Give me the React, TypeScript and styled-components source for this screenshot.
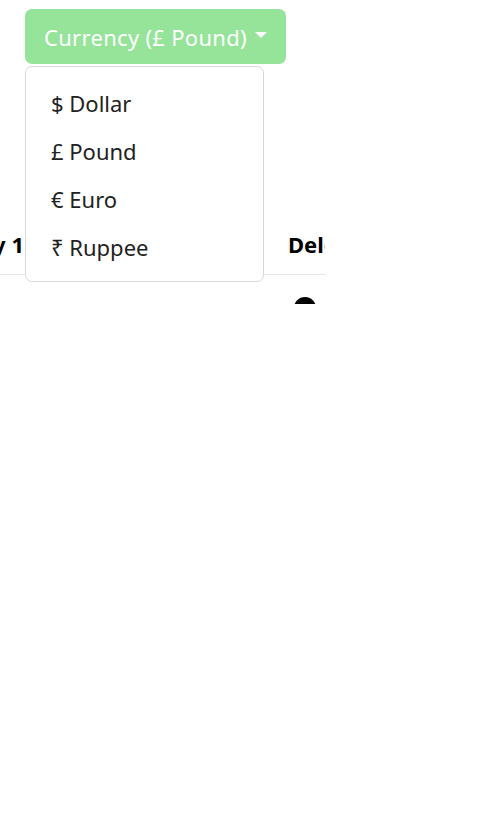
import React from "react";
import styled, { createGlobalStyle } from "styled-components";

const Global = createGlobalStyle`
  html, body { margin: 0; padding: 0; background: #fff; }
  body { font-family: "Noto Sans", "Open Sans", sans-serif; }
`;

const Frame = styled.div`
  position: relative;
  width: 325px;
  height: 304px;
  overflow: hidden;
`;

const Toolbar = styled.div`
  box-sizing: border-box;
  padding: 9px 0 0 25px;
  height: 196px;
`;

const DropButton = styled.button`
  display: inline-flex;
  align-items: center;
  gap: 8px;
  height: 55px;
  padding: 0 19px 0 19px;
  border: none;
  border-radius: 7px;
  background: #95e499;
  color: #fff;
  font-family: inherit;
  font-size: 22px;
  letter-spacing: 0.3px;
  cursor: pointer;
`;

const Caret = styled.span`
  width: 0;
  height: 0;
  border-left: 6.5px solid transparent;
  border-right: 6.5px solid transparent;
  border-top: 6.5px solid #fff;
  margin-top: -3px;
`;

const Menu = styled.ul`
  position: absolute;
  z-index: 2;
  left: 25px;
  top: 66px;
  width: 239px;
  box-sizing: border-box;
  margin: 0;
  padding: 12px 0 10px;
  list-style: none;
  background: #fff;
  border: 1px solid #d9d9d9;
  border-radius: 7px;
`;

const MenuItem = styled.li`
  height: 48px;
  display: flex;
  align-items: center;
  padding-left: 25px;
  font-size: 22px;
  color: #222;
`;

const HeadRow = styled.div`
  box-sizing: border-box;
  display: flex;
  align-items: center;
  height: 79px;
  padding-top: 18px;
  border-bottom: 1px solid #e6e6e6;
  font-weight: 700;
  font-size: 22px;
  color: #000;
`;

const HeadCell = styled.div<{ $w: number; $end?: boolean }>`
  flex: 0 0 ${(p) => p.$w}px;
  min-width: 0;
  display: flex;
  justify-content: ${(p) => (p.$end ? "flex-end" : "flex-start")};
  white-space: nowrap;
`;

const Spacer = styled.div`
  flex: 1;
`;

const BodyRow = styled.div`
  display: flex;
  justify-content: flex-end;
  padding: 22px 9px 0 0;
`;

const Dot = styled.span`
  flex: 0 0 22px;
  width: 22px;
  height: 22px;
  border-radius: 50%;
  background: #000;
`;

export default function App() {
  return (
    <>
      <Global />
      <Frame>
        <Toolbar>
          <DropButton>
            Currency (£ Pound)
            <Caret />
          </DropButton>
        </Toolbar>
        <Menu>
          <MenuItem>$ Dollar</MenuItem>
          <MenuItem>£ Pound</MenuItem>
          <MenuItem>€ Euro</MenuItem>
          <MenuItem>₹ Ruppee</MenuItem>
        </Menu>
        <HeadRow>
          <HeadCell $w={24} $end>
            Qty 1
          </HeadCell>
          <Spacer />
          <HeadCell $w={37}>Delete</HeadCell>
        </HeadRow>
        <BodyRow>
          <Dot />
        </BodyRow>
      </Frame>
    </>
  );
}
